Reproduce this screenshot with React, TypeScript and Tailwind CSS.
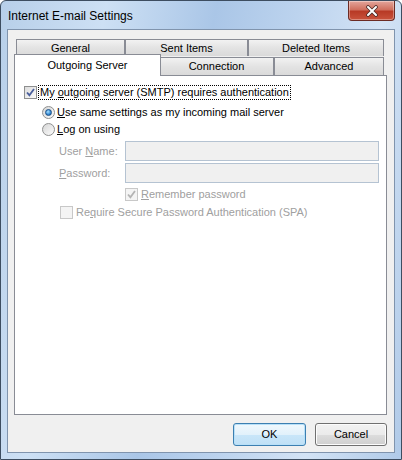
import React from "react";

const font = { fontFamily: '"Liberation Sans", Arial, sans-serif' };

function Check({ checked, disabled }: { checked?: boolean; disabled?: boolean }) {
  return (
    <span
      className={
        "flex h-[13px] w-[13px] shrink-0 items-center justify-center border " +
        (disabled
          ? "border-[#c8c8c8] bg-[#f4f4f4]"
          : "border-[#8e8f8f] bg-[linear-gradient(135deg,#dcdcdc,#fbfbfb)]")
      }
    >
      {checked && (
        <svg width="9" height="9" viewBox="0 0 9 9">
          <path
            d="M1 4.5 L3.4 7.2 L8 1"
            fill="none"
            stroke={disabled ? "#b4b4b4" : "#4a5f9c"}
            strokeWidth="1.8"
          />
        </svg>
      )}
    </span>
  );
}

function Radio({ on }: { on?: boolean }) {
  return (
    <span className="flex h-[13px] w-[13px] shrink-0 items-center justify-center rounded-full border border-[#8e8f8f] bg-[linear-gradient(135deg,#d6d6d6,#fcfcfc)]">
      {on && (
        <span className="h-[7px] w-[7px] rounded-full border border-[#1b4f86] bg-[radial-gradient(circle_at_40%_35%,#a8e1ff,#3b8fd8_55%,#15508f)]" />
      )}
    </span>
  );
}

function Tab({ label, w }: { label: string; w: string }) {
  return (
    <div
      className={
        "flex h-[17px] items-center justify-center border border-b-0 border-[#898c95] bg-[linear-gradient(#f2f2f2,#e3e3e3_50%,#dadada)] text-[11px] text-black " +
        w
      }
    >
      {label}
    </div>
  );
}

export default function App() {
  return (
    <div
      style={font}
      className="flex h-[460px] w-[402px] flex-col overflow-hidden rounded-t-[6px] border border-[#3d4d60] bg-[linear-gradient(100deg,#b7cfe9,#cde0f4_22%,#aac6e7_45%,#bcd3ee_62%,#d3e3f5_80%,#b0cae8)]"
    >
      {/* title bar */}
      <div className="flex h-[28px] shrink-0 items-start justify-between">
        <span className="pl-[7px] pt-[6px] text-[12px] text-black">Internet E-mail Settings</span>
        <div className="mr-[6px] flex h-[20px] w-[47px] items-center justify-center rounded-b-[4px] border border-t-0 border-[#6b2b24] bg-[linear-gradient(#e4a69c,#d0705f_45%,#b83a26_55%,#c9533c)] shadow-[inset_0_0_0_1px_rgba(255,255,255,0.35)]">
          <svg width="14" height="12" viewBox="0 0 14 12">
            <path d="M3 2 L11 10 M11 2 L3 10" stroke="#4a2a27" strokeWidth="3.6" strokeLinecap="round" />
            <path d="M3 2 L11 10 M11 2 L3 10" stroke="#ffffff" strokeWidth="2" strokeLinecap="round" />
          </svg>
        </div>
      </div>

      {/* client area */}
      <div className="mx-[6px] mb-[6px] flex flex-1 flex-col border border-[#8094ad] bg-[#f0f0f0]">
        <div className="ml-[6px] mr-[7px] mt-[9px] flex flex-1 flex-col">
          {/* back tab row */}
          <div className="flex px-[2px]">
            <Tab label="General" w="w-[109px]" />
            <Tab label="Sent Items" w="w-[123px]" />
            <Tab label="Deleted Items" w="w-[136px]" />
          </div>
          {/* front tab row */}
          <div className="flex h-[19px] items-end px-[2px]">
            <div className="relative z-10 -mx-[2px] -mb-[1px] flex h-[22px] w-[147px] items-center justify-center border border-b-0 border-[#898c95] bg-white text-[11px] text-black">
              Outgoing Server
            </div>
            <Tab label="Connection" w="w-[115px] h-[18px]" />
            <Tab label="Advanced" w="w-[110px] h-[18px]" />
          </div>

          {/* panel */}
          <div className="flex flex-1 flex-col border border-[#898c95] bg-white pt-[8px] text-[11px] text-black">
            <div className="flex h-[17px] items-center pl-[9px]">
              <Check checked />
              <span className="ml-[1px] border border-dotted border-black px-[1px] leading-[13px]">
                My <span className="underline">o</span>utgoing server (SMTP) requires authentication
              </span>
            </div>
            <div className="mt-[3px] flex h-[17px] items-center gap-[2px] pl-[27px]">
              <Radio on />
              <span>
                <span className="underline">U</span>se same settings as my incoming mail server
              </span>
            </div>
            <div className="flex h-[17px] items-center gap-[2px] pl-[27px]">
              <Radio />
              <span>
                <span className="underline">L</span>og on using
              </span>
            </div>
            <div className="mt-[3px] flex h-[20px] items-center pl-[44px] pr-[7px] text-[#a0a0a0]">
              <span className="w-[66px]">
                User <span className="underline">N</span>ame:
              </span>
              <div className="h-[20px] flex-1 border border-[#b5c3d2] bg-[#f0f0f0]" />
            </div>
            <div className="mt-[2px] flex h-[20px] items-center pl-[44px] pr-[7px] text-[#a0a0a0]">
              <span className="w-[66px]">
                <span className="underline">P</span>assword:
              </span>
              <div className="h-[20px] flex-1 border border-[#b5c3d2] bg-[#f0f0f0]" />
            </div>
            <div className="mt-[5px] flex h-[13px] items-center gap-[3px] pl-[110px] text-[#a0a0a0]">
              <Check checked disabled />
              <span>
                <span className="underline">R</span>emember password
              </span>
            </div>
            <div className="mt-[5px] flex h-[13px] items-center gap-[3px] pl-[45px] text-[#a0a0a0]">
              <Check disabled />
              <span>
                Re<span className="underline">q</span>uire Secure Password Authentication (SPA)
              </span>
            </div>
          </div>

          {/* buttons */}
          <div className="flex justify-end gap-[9px] pb-[6px] pt-[8px]">
            <button className="h-[23px] w-[73px] rounded-[3px] border border-[#3c7fb1] bg-[linear-gradient(#f0f8fd,#e2f1fb_50%,#c9e6f9_51%,#bfe0f6)] text-[11px] text-black shadow-[inset_0_0_0_1px_#b8e0f8]">
              OK
            </button>
            <button className="h-[23px] w-[72px] rounded-[3px] border border-[#707070] bg-[linear-gradient(#f2f2f2,#ebebeb_50%,#dddddd_51%,#cfcfcf)] text-[11px] text-black shadow-[inset_0_0_0_1px_#fcfcfc]">
              Cancel
            </button>
          </div>
        </div>
      </div>
    </div>
  );
}
